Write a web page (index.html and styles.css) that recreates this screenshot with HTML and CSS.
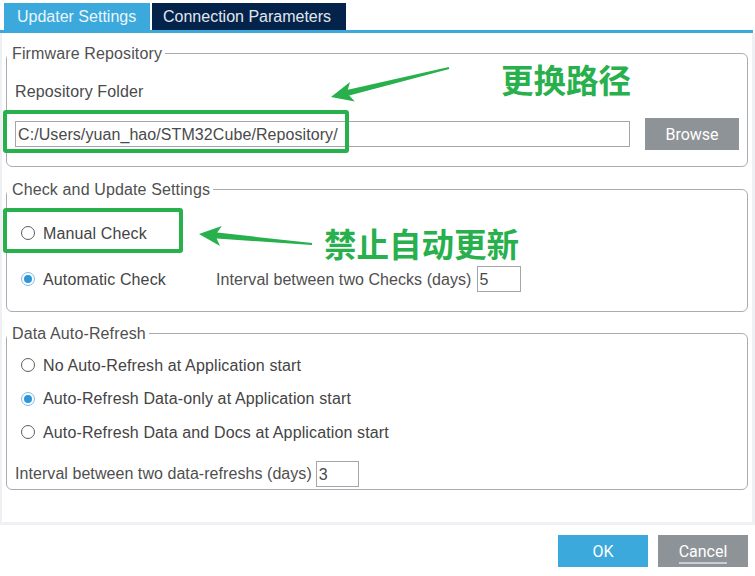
FILE: index.html
```html
<!DOCTYPE html>
<html>
<head>
<meta charset="utf-8">
<link rel="stylesheet" href="styles.css">
</head>
<body>
<div class="page">
  <div class="tabs">
    <div class="tab tab-active">Updater Settings</div>
    <div class="tab tab-dark">Connection Parameters</div>
  </div>
  <div class="tabline"></div>
  <div class="panel">
    <fieldset class="group g1">
      <legend>Firmware Repository</legend>
      <div class="g1-body">
        <div class="label">Repository Folder</div>
        <div class="path-row">
          <div class="input path-input">C:/Users/yuan_hao/STM32Cube/Repository/</div>
          <div class="btn btn-gray browse">Browse</div>
        </div>
      </div>
    </fieldset>
    <fieldset class="group g2">
      <legend>Check and Update Settings</legend>
      <div class="g2-body">
        <div class="row"><span class="radio"></span>Manual Check</div>
        <div class="row row-auto">
          <span class="auto-label"><span class="radio checked"></span>Automatic Check</span>
          <span class="muted">Interval between two Checks (days)</span>
          <span class="input small-input">5</span>
        </div>
      </div>
    </fieldset>
    <fieldset class="group g3">
      <legend>Data Auto-Refresh</legend>
      <div class="g3-body">
        <div class="radios">
          <div class="row"><span class="radio"></span>No Auto-Refresh at Application start</div>
          <div class="row"><span class="radio checked"></span>Auto-Refresh Data-only at Application start</div>
          <div class="row"><span class="radio"></span>Auto-Refresh Data and Docs at Application start</div>
        </div>
        <div class="interval-row">
          <span class="muted">Interval between two data-refreshs (days)</span>
          <span class="input small-input i3">3</span>
        </div>
      </div>
    </fieldset>
  </div>
  <div class="footer">
    <div class="btn btn-blue">OK</div>
    <div class="btn btn-gray cancel"><span class="cancel-text">Cancel</span></div>
  </div>

  <div class="mark box1"></div>
  <div class="mark box2"></div>
  <div class="note note1">更换路径</div>
  <div class="note note2">禁止自动更新</div>
  <svg class="arrows" width="755" height="576" viewBox="0 0 755 576">
    <polygon fill="#27b04b" points="331,97 350,82 347.8,89.8 448.8,67 449.2,69 349.2,95.6 354.8,101.4"/>
    <polygon fill="#27b04b" points="199,234 221.8,225.9 217.2,232.6 312.1,243 311.9,245 216.6,238.6 220,245.9"/>
  </svg>
</div>
</body>
</html>
```
FILE: styles.css
```css
* { box-sizing: border-box; }
html, body { margin: 0; padding: 0; background: #ffffff; }
body {
  font-family: "Liberation Sans", Arial, sans-serif;
  font-size: 16px;
  color: #4a4a4a;
}
.page {
  position: relative;
  width: 755px;
  height: 576px;
  overflow: hidden;
}
.tabs {
  display: flex;
  gap: 2px;
  padding: 3px 0 0 4px;
}
.tab {
  height: 27px;
  line-height: 27px;
  font-size: 16px;
}
.tab-active {
  background: #3ba9dc;
  color: #eaf5fb;
  padding: 0 13px 0 13px;
  width: 146px;
}
.tab-dark {
  background: #03234b;
  color: #e2e6eb;
  padding: 0 12px 0 11px;
  width: 194px;
}
.tabline {
  height: 3px;
  background: #3ba9dc;
  margin-right: 2px;
}
.panel {
  border: 2px solid #eef0f3;
  border-top: 0;
  border-right-width: 3px;
  border-bottom-width: 3px;
  padding: 11px 4px 32px 4px;
  display: flex;
  flex-direction: column;
  gap: 13px;
  letter-spacing: 0.13px;
}
.group {
  margin: 0;
  padding: 0;
  border: 1px solid #a9adb2;
  border-radius: 6px;
  min-width: 0;
}
.group legend {
  padding: 1px 3px 0 5px;
  margin: 0;
  font-size: 16px;
  line-height: 17px;
  color: #505050;
}
.g3 { margin-top: -1px; }
.label { line-height: 20px; }
.g1-body { padding: 20px 8px 16px 8px; }
.path-row {
  margin-top: 16px;
  display: flex;
  align-items: center;
  gap: 15px;
}
.input {
  border: 1px solid #a3a7ab;
  height: 26px;
  line-height: 25px;
  padding-left: 2px;
  color: #4a4a4a;
  background: #fff;
}
.path-input { width: 615px; letter-spacing: 0.08px; }
.btn {
  height: 32px;
  display: flex;
  align-items: center;
  justify-content: center;
  font-family: Roboto, "Liberation Sans", sans-serif;
  font-size: 16px;
  color: #ffffff;
  letter-spacing: 0;
}
.btn-gray { background: #8e9398; }
.btn-blue { background: #3ba9dc; }
.browse { width: 94px; }

.row {
  display: flex;
  align-items: center;
  height: 20px;
  line-height: 21px;
  color: #444;
}
.g2-body { padding: 25px 8px 19px 14px; }
.row-auto { margin-top: 23px; height: 26px; }
.auto-label {
  display: flex;
  align-items: center;
  width: 195px;
}
.muted { color: #4f4f4f; letter-spacing: 0.06px; }
.small-input { width: 44px; margin-left: 5px; }
.i3 { width: 43px; margin-left: 4px; }

.radio {
  width: 14px;
  height: 14px;
  border-radius: 50%;
  border: 1.3px solid #5e5e5e;
  margin-right: 8px;
  position: relative;
  flex: none;
  background: #fff;
}
.radio.checked { border: 1px solid #7dbce6; }
.radio.checked::after {
  content: "";
  position: absolute;
  left: 2px;
  top: 2px;
  width: 8px;
  height: 8px;
  border-radius: 50%;
  background: #2f96d8;
}
.g3-body { padding: 13px 8px 2px 8px; }
.radios {
  display: flex;
  flex-direction: column;
  gap: 13.5px;
  padding-left: 6px;
}
.interval-row {
  margin-top: 19px;
  display: flex;
  align-items: center;
  height: 26px;
}
.footer {
  display: flex;
  justify-content: flex-end;
  gap: 10px;
  padding: 10px 7px 0 0;
}
.footer .btn { width: 90px; }
.cancel-text {
  border-bottom: 2px solid #c9ccd0;
  padding-bottom: 1px;
  margin-top: 4px;
}
.mark {
  position: absolute;
  border: 4px solid #27b04b;
  border-radius: 3px;
}
.box1 { left: 3px; top: 110px; width: 346px; height: 43px; }
.box2 { left: 3px; top: 208px; width: 180px; height: 45px; }
.note {
  position: absolute;
  font-family: "Noto Sans CJK SC", sans-serif;
  font-weight: 700;
  font-size: 32.5px;
  line-height: 33px;
  color: #27b04b;
  white-space: nowrap;
}
.note1 { left: 501px; top: 62px; }
.note2 { left: 324px; top: 226px; }
.arrows {
  position: absolute;
  left: 0;
  top: 0;
  pointer-events: none;
}
```
